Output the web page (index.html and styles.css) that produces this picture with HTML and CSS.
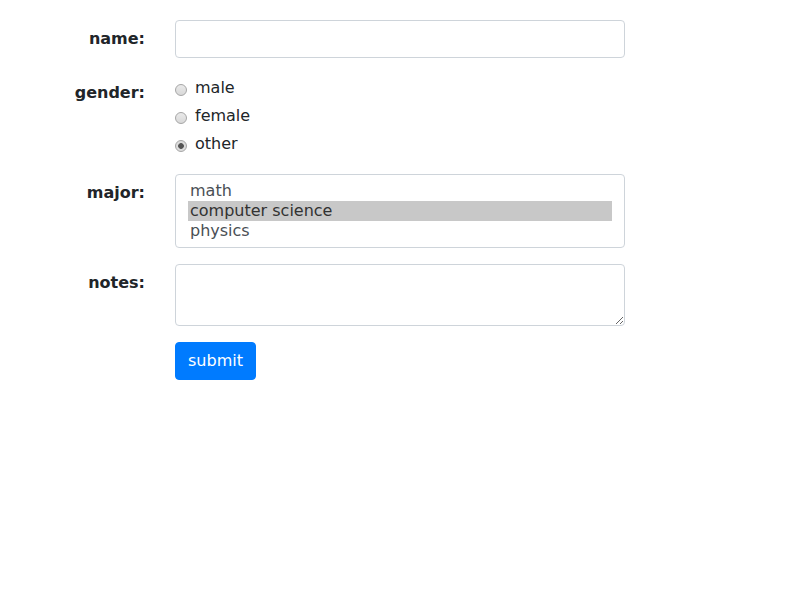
FILE: index.html
```html
<!DOCTYPE html>
<html>
<head>
<meta charset="utf-8">
<link rel="stylesheet" href="styles.css">
</head>
<body>
<form class="form">
  <label class="label" for="name">name:</label>
  <div class="field"><input id="name" class="control" type="text"></div>

  <div class="label">gender:</div>
  <div class="field radios">
    <label class="radio"><input type="radio" name="g" class="dot"><span>male</span></label>
    <label class="radio"><input type="radio" name="g" class="dot"><span>female</span></label>
    <label class="radio"><input type="radio" name="g" class="dot" checked><span>other</span></label>
  </div>

  <label class="label" for="major">major:</label>
  <div class="field">
    <select id="major" class="control list" multiple size="3">
      <option>math</option>
      <option selected>computer science</option>
      <option>physics</option>
    </select>
  </div>

  <label class="label" for="notes">notes:</label>
  <div class="field"><textarea id="notes" class="control area" rows="2"></textarea></div>

  <div class="label"></div>
  <div class="field"><button type="button" class="btn">submit</button></div>
</form>
</body>
</html>
```

FILE: styles.css
```css
html, body {
  margin: 0;
  padding: 0;
  background: #fff;
}
body {
  font-family: "DejaVu Sans", sans-serif;
  font-size: 16px;
  line-height: 24px;
  color: #212529;
}
.form {
  display: grid;
  grid-template-columns: 145px 450px;
  column-gap: 30px;
  row-gap: 16px;
  padding-top: 20px;
  align-items: start;
}
.label {
  font-weight: bold;
  text-align: right;
  padding-top: 7px;
  line-height: 24px;
}
.field {
  display: flex;
  flex-direction: column;
}
.control {
  box-sizing: border-box;
  width: 450px;
  margin: 0;
  font-family: "DejaVu Sans", sans-serif;
  font-size: 16px;
  line-height: 24px;
  color: #495057;
  background: #fff;
  border: 1px solid #ced4da;
  border-radius: 4px;
  padding: 6px 12px;
  outline: none;
}
input.control {
  height: 38px;
}
.list {
  height: 74px;
  overflow: hidden;
}
.list option {
  height: 20px;
  line-height: 20px;
  padding: 0 2px;
  min-height: 0;
  color: #4a4f55;
}
.list option:checked {
  background: #c8c8c8;
  color: #323232;
}
.area {
  height: 62px;
  resize: vertical;
}
.radio {
  display: flex;
  align-items: center;
  height: 28px;
}
.radio span {
  margin-left: 8px;
  margin-top: -1px;
}
.dot {
  appearance: none;
  -webkit-appearance: none;
  box-sizing: border-box;
  width: 12px;
  height: 12px;
  margin: 3px 0 0 0;
  border: 1px solid #a6a6a6;
  border-radius: 50%;
  background: linear-gradient(#eaeaea, #d8d8d8);
}
.dot:checked {
  background: radial-gradient(circle, #555 0 2.5px, #dcdcdc 3.2px);
}
.btn {
  align-self: flex-start;
  height: 38px;
  padding: 6px 12px;
  font-family: "DejaVu Sans", sans-serif;
  font-size: 16px;
  line-height: 24px;
  color: #fff;
  background: #007bff;
  border: 1px solid #007bff;
  border-radius: 4px;
  margin: 0;
}
```
